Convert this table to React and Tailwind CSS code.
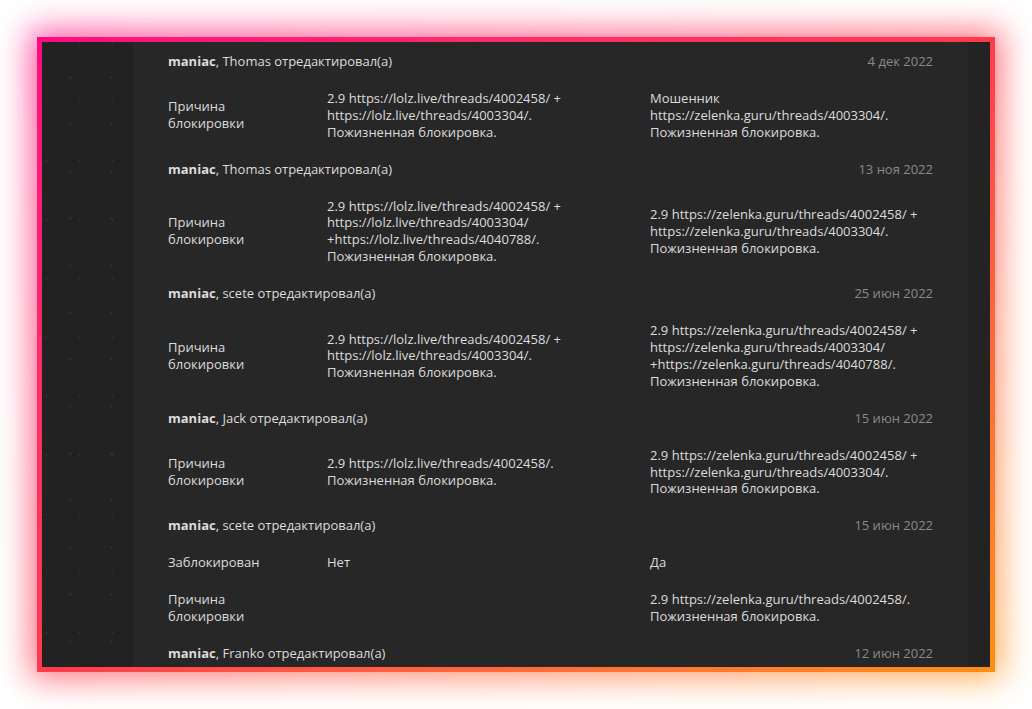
import React from "react";

const entries = [
  {
    who: "Thomas",
    date: "4 дек 2022",
    rows: [
      {
        label: "Причина блокировки",
        before: ["2.9 https://lolz.live/threads/4002458/ + https://lolz.live/threads/4003304/. Пожизненная блокировка."],
        after: ["Мошенник https://zelenka.guru/threads/4003304/. Пожизненная блокировка."],
      },
    ],
  },
  {
    who: "Thomas",
    date: "13 ноя 2022",
    rows: [
      {
        label: "Причина блокировки",
        before: ["2.9 https://lolz.live/threads/4002458/ + https://lolz.live/threads/4003304/ +https://lolz.live/threads/4040788/. Пожизненная блокировка."],
        after: ["2.9 https://zelenka.guru/threads/4002458/ + https://zelenka.guru/threads/4003304/. Пожизненная блокировка."],
      },
    ],
  },
  {
    who: "scete",
    date: "25 июн 2022",
    rows: [
      {
        label: "Причина блокировки",
        before: ["2.9 https://lolz.live/threads/4002458/ + https://lolz.live/threads/4003304/. Пожизненная блокировка."],
        after: ["2.9 https://zelenka.guru/threads/4002458/ + https://zelenka.guru/threads/4003304/ +https://zelenka.guru/threads/4040788/. Пожизненная блокировка."],
      },
    ],
  },
  {
    who: "Jack",
    date: "15 июн 2022",
    rows: [
      {
        label: "Причина блокировки",
        before: ["2.9 https://lolz.live/threads/4002458/. Пожизненная блокировка."],
        after: ["2.9 https://zelenka.guru/threads/4002458/ + https://zelenka.guru/threads/4003304/. Пожизненная блокировка."],
      },
    ],
  },
  {
    who: "scete",
    date: "15 июн 2022",
    rows: [
      { label: "Заблокирован", before: ["Нет"], after: ["Да"] },
      {
        label: "Причина блокировки",
        before: [""],
        after: ["2.9 https://zelenka.guru/threads/4002458/. Пожизненная блокировка."],
      },
    ],
  },
  { who: "Franko", date: "12 июн 2022", rows: [] },
];

const Header = ({ who, date }) => (
  <div className="flex justify-between py-[10px]">
    <span>
      <b className="font-bold">maniac</b>, {who} отредактировал(а)
    </span>
    <span className="text-[#8a8a8a]">{date}</span>
  </div>
);

const Row = ({ label, before, after }) => (
  <div className="grid grid-cols-[159px_323px_283px] items-center py-[10px]">
    <div className="w-[100px]">{label}</div>
    <div className="pr-[33px]">{before}</div>
    <div>{after}</div>
  </div>
);

export default function App() {
  return (
    <div className="relative h-[709px] w-[1032px] overflow-hidden bg-white p-[37px] font-['Open_Sans',sans-serif] text-[13px] leading-[16.9px]">
      {/* glow */}
      <div className="absolute left-[30px] top-[30px] h-[649px] w-[972px] bg-gradient-to-br from-[#ff0a7e] via-[#ff3a4e] to-[#ff9414] opacity-70 blur-[16px]" />

      <div className="relative h-[635px] w-[958px] bg-gradient-to-br from-[#ff0a80] via-[#ff3a4c] to-[#ff8e10] p-[5px]">
        <div className="flex h-full overflow-hidden text-[#dcdcdc]">
          <div className="w-[91px] shrink-0 bg-[#222222] bg-[radial-gradient(circle,#383838_0.6px,transparent_1.2px),radial-gradient(circle,#333333_0.6px,transparent_1.2px),radial-gradient(circle,#3a3a3a_0.5px,transparent_1px)] bg-[length:41px_47px,33px_59px,53px_37px] bg-[position:8px_12px,21px_30px,37px_5px]" />
          <div className="w-[835px] shrink-0 bg-[#272727] px-[35px] pt-[1px]">
            {entries.map((e, i) => (
              <div key={i}>
                <Header who={e.who} date={e.date} />
                {e.rows.map((r, j) => (
                  <Row key={j} {...r} />
                ))}
              </div>
            ))}
          </div>
          <div className="flex-1 bg-[#232323]" />
        </div>
      </div>
    </div>
  );
}
